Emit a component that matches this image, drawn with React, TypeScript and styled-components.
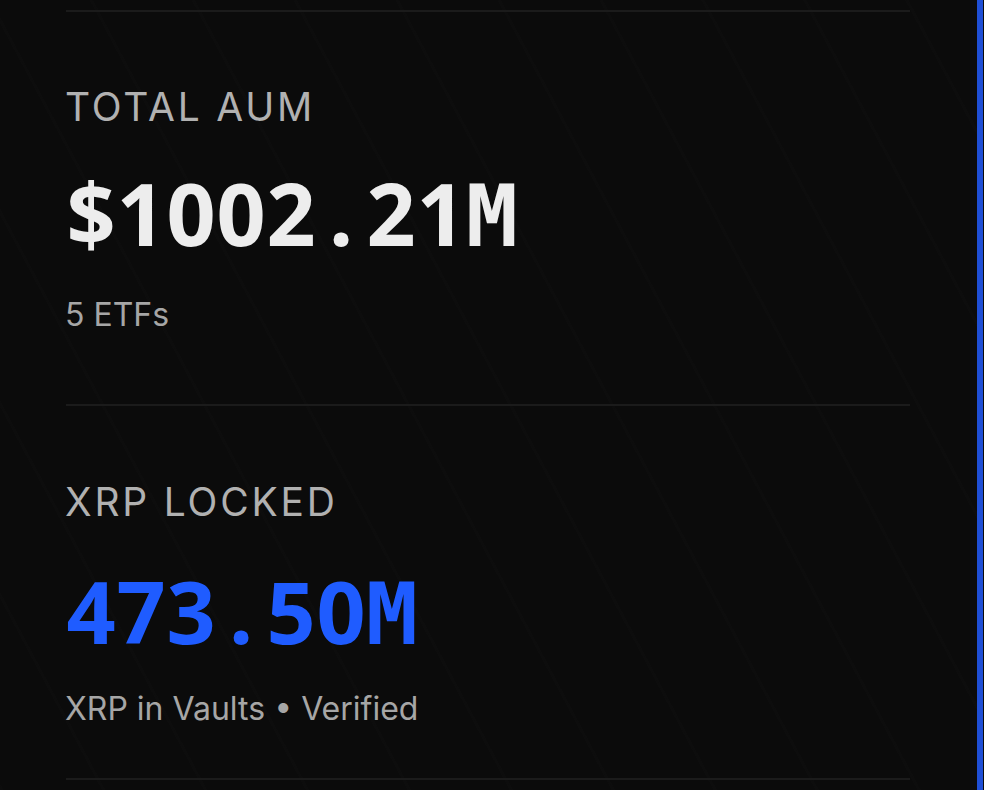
import React from "react";
import styled, { createGlobalStyle } from "styled-components";

const Global = createGlobalStyle`
  html, body {
    margin: 0;
    padding: 0;
    background: #0b0b0b;
  }
  body {
    font-family: Inter, "Noto Sans", sans-serif;
    -webkit-font-smoothing: antialiased;
  }
`;

const Page = styled.div`
  width: 983px;
  min-height: 790px;
  box-sizing: border-box;
  border-right: 6px solid #1f4fd6;
  background-color: #0b0b0b;
  background-image: repeating-linear-gradient(
    62deg,
    rgba(255, 255, 255, 0.006) 0px,
    rgba(255, 255, 255, 0.006) 3px,
    rgba(0, 0, 0, 0) 3px,
    rgba(0, 0, 0, 0) 90px
  );
  padding: 10px 67px 0 66px;
  display: flex;
  flex-direction: column;
`;

const Divider = styled.div`
  height: 2px;
  background: #1b1b1b;
`;

const Stat = styled.section<{ $top: number; $bottom: number }>`
  display: flex;
  flex-direction: column;
  padding: ${(p) => p.$top}px 0 ${(p) => p.$bottom}px;
`;

const Label = styled.h3`
  margin: 0 0 0 -1px;
  font-size: 39px;
  font-weight: 400;
  line-height: 1;
  letter-spacing: 2.8px;
  color: #b1b1b1;
  text-transform: uppercase;
`;

const Value = styled.div<{ $accent?: boolean; $gap: number }>`
  margin-top: ${(p) => p.$gap}px;
  font-family: "Noto Sans", Inter, sans-serif;
  font-weight: 700;
  font-size: 86px;
  line-height: 1;
  white-space: nowrap;
  color: ${(p) => (p.$accent ? "#1f5cff" : "#ededed")};
`;

/* fixed-width cell for a ticker-style monospaced figure */
const Glyph = styled.span<{ $letter?: boolean }>`
  display: inline-block;
  width: 50px;
  text-align: center;
  line-height: 1;
  font-family: ${(p) =>
    p.$letter ? '"DejaVu Sans Mono", monospace' : '"Noto Sans", Inter, sans-serif'};
  font-weight: 700;
`;

const Sub = styled.div<{ $gap: number }>`
  margin: ${(p) => p.$gap}px 0 0 -1px;
  font-size: 32px;
  line-height: 1;
  color: #a6a6a6;
`;

function Figure({ text, accent, gap }: { text: string; accent?: boolean; gap: number }) {
  return (
    <Value $accent={accent} $gap={gap} aria-label={text}>
      {text.split("").map((c, i) => (
        <Glyph key={i} $letter={/[A-Z]/.test(c)}>
          {c}
        </Glyph>
      ))}
    </Value>
  );
}

export default function App() {
  return (
    <>
      <Global />
      <Page>
        <Divider />
        <Stat $top={75} $bottom={73}>
          <Label>Total AUM</Label>
          <Figure text="$1002.21M" gap={44} />
          <Sub $gap={40}>5 ETFs</Sub>
        </Stat>
        <Divider />
        <Stat $top={76} $bottom={53}>
          <Label>XRP Locked</Label>
          <Figure text="473.50M" accent gap={47} />
          <Sub $gap={36}>XRP in Vaults • Verified</Sub>
        </Stat>
        <Divider />
      </Page>
    </>
  );
}
